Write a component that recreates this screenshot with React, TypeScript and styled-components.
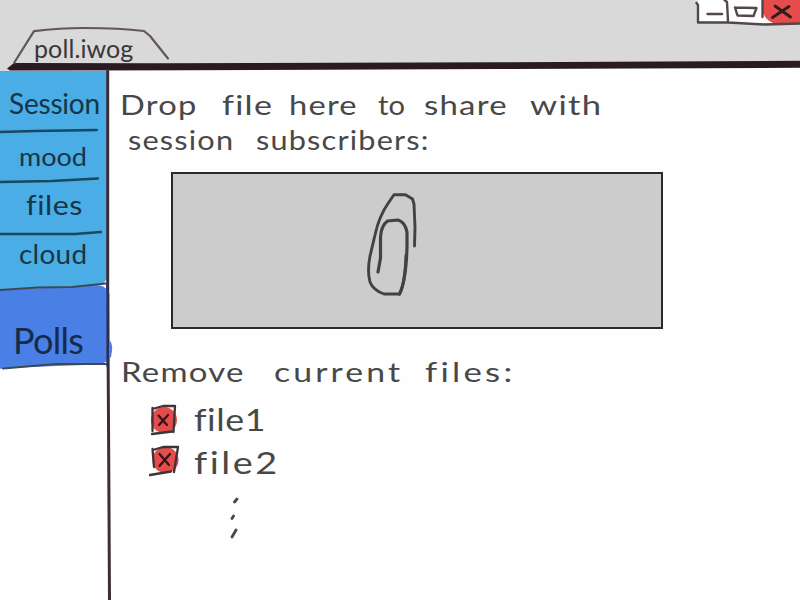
import React from "react";
import styled, { createGlobalStyle } from "styled-components";

const GlobalStyle = createGlobalStyle`
  * { box-sizing: border-box; }
  body { margin: 0; background: #fff; overflow: hidden; }
`;

const Window = styled.div`
  width: 800px;
  height: 600px;
  display: flex;
  flex-direction: column;
  background: #fefefe;
  color: #484848;
  font-family: Lato, "Open Sans", sans-serif;
  overflow: hidden;
`;

const TitleBar = styled.header`
  position: relative;
  display: flex;
  justify-content: space-between;
  flex: 0 0 71px;
  background: #d9d9d9;
`;

const Ink = styled.svg`
  position: absolute;
  left: 0;
  top: 0;
  overflow: visible;
  fill: none;
  stroke-linecap: round;
  stroke-linejoin: round;
  pointer-events: none;
`;

const TabTitle = styled.div`
  position: relative;
  padding: 29px 0 0 34px;
  line-height: 38px;
  color: #383637;
`;

const Controls = styled.svg`
  position: relative;
  width: 110px;
  height: 30px;
  overflow: hidden;
  fill: none;
  stroke: #54474a;
  stroke-width: 2.4;
  stroke-linecap: round;
  stroke-linejoin: round;
`;

const Body = styled.div`
  flex: 1;
  display: grid;
  grid-template-columns: 110px 1fr;
`;

const Sidebar = styled.nav`
  position: relative;
  display: flex;
  flex-direction: column;
`;

const NavItem = styled.a<{ $height: number; $left: number; $top: number; $active?: boolean }>`
  position: relative;
  height: ${(p) => p.$height}px;
  padding: ${(p) => p.$top}px 0 0 ${(p) => p.$left}px;
  line-height: 40px;
  color: ${(p) => (p.$active ? "#172a4c" : "#163546")};
`;

const Content = styled.main`
  display: flex;
  flex-direction: column;
`;

const Line = styled.div<{ $left: number; $height: number }>`
  display: flex;
  height: ${(p) => p.$height}px;
  line-height: 40px;
  padding-left: ${(p) => p.$left}px;
`;

const Word = styled.span<{ $size: number; $track?: number; $stretch?: number; $advance?: number }>`
  display: block;
  flex: none;
  white-space: nowrap;
  font-size: ${(p) => p.$size}px;
  letter-spacing: ${(p) => p.$track ?? 0}px;
  width: ${(p) => (p.$advance ? `${p.$advance}px` : "auto")};
  transform: scaleX(${(p) => p.$stretch ?? 1});
  transform-origin: left center;
`;

const Heading = styled.section`
  padding-top: 14px;
  height: 101px;
`;

const DropZone = styled.section`
  width: 492px;
  height: 157px;
  margin-left: 61px;
  border: 2px solid #2b2a2b;
  background: #ccc;
`;

const ClipIcon = styled.svg`
  display: block;
  margin: 15px 0 0 190px;
  fill: none;
  stroke: #424242;
  stroke-linecap: round;
  stroke-linejoin: round;
`;

const FileList = styled.section`
  padding-top: 23px;
`;

const FileRow = styled.div<{ $height: number }>`
  display: flex;
  height: ${(p) => p.$height}px;
  padding-left: 39px;
  line-height: 40px;
`;

const RemoveButton = styled.svg`
  flex: none;
  width: 45px;
  height: 40px;
  fill: none;
  stroke: #3c3536;
  stroke-width: 2.3;
  stroke-linecap: round;
  stroke-linejoin: round;
`;

const Ellipsis = styled.svg`
  display: block;
  margin: 11px 0 0 118px;
  stroke: #484848;
  stroke-width: 2.8;
  stroke-linecap: round;
`;

type W = { text: string; size: number; track: number; stretch: number; advance: number };

const intro: W[] = [
  { text: "Drop", size: 27, track: 1, stretch: 1.21, advance: 102 },
  { text: "file", size: 27, track: 1, stretch: 1.26, advance: 67 },
  { text: "here", size: 27, track: 1, stretch: 1.21, advance: 89 },
  { text: "to", size: 27, track: 0, stretch: 1.08, advance: 46 },
  { text: "share", size: 27, track: 1, stretch: 1.22, advance: 106 },
  { text: "with", size: 27, track: 1, stretch: 1.28, advance: 80 },
];
const intro2: W[] = [
  { text: "session", size: 26, track: 1, stretch: 1.18, advance: 128 },
  { text: "subscribers:", size: 26, track: 1, stretch: 1.18, advance: 190 },
];
const removal: W[] = [
  { text: "Remove", size: 27, track: 1, stretch: 1.22, advance: 153 },
  { text: "current", size: 27, track: 2.5, stretch: 1.25, advance: 151 },
  { text: "files:", size: 27, track: 2.5, stretch: 1.29, advance: 100 },
];

const Words = ({ items }: { items: W[] }) => (
  <>
    {items.map((w) => (
      <Word key={w.text} $size={w.size} $track={w.track} $stretch={w.stretch} $advance={w.advance}>
        {w.text}
      </Word>
    ))}
  </>
);

export default function App() {
  return (
    <>
      <GlobalStyle />
      <Window>
        <TitleBar>
          <Ink width="800" height="71">
            <path d="M104 71L800 66V71Z" fill="#fefefe" />
            <path d="M7 68.5L14 63L160 63.2L500 62.3L800 60.8V67.8L500 69L160 70.3L10 70.5Z" fill="#291b21" />
            <path d="M14 63L34 31.2Q60 28 84 28Q120 28 144 31L150 36L168 58.5" stroke="#62565a" strokeWidth="2.2" />
          </Ink>
          <TabTitle>
            <Word $size={25} $track={0.1}>poll.iwog</Word>
          </TabTitle>
          <Controls viewBox="690 0 110 30">
            <path d="M698 0H800V23L735 23L698 21Z" fill="#fefefe" stroke="none" />
            <path d="M763 0H800V23.5H774Q764 20 762 9Z" fill="#e64c4c" stroke="none" />
            <path d="M696.500 3L698 5V22.500M698 22.500L728 22.500L765 24.500L800 23.500M724.500 0L727 2L728 21M762.500 0V17M707.500 14H722M735 7.500L737.500 15.500L753.500 16L756.500 8L735 7.500" />
            <path d="M772.500 17.500L789 6.500M775 6L790.500 17" stroke="#301b20" strokeWidth="2.8" />
          </Controls>
        </TitleBar>
        <Body>
          <Sidebar>
            <Ink width="114" height="529" viewBox="0 71 114 529">
              <path d="M0 71H107V278Q105 284 97 286L0 290Z" fill="#4bade5" />
              <path d="M107.700 70V300L108.500 420L109.500 600" stroke="#3c2d37" strokeWidth="3" />
              <path d="M0 290L100 285.500Q107 287 109.500 294V340Q114 345 111 357Q107 363 98 364.500L3 368L0 369Z" fill="#4a80e5" />
              <path d="M107.700 284V366" stroke="#2f2e52" strokeWidth="2.600" />
              <path d="M0 132L35 131L97 130M0 182L52 181L98 178.500M0 234L75 234L101 232" stroke="#19495f" strokeWidth="2.3" />
              <path d="M0 290L38 287.500L72 287L106 283.500M3 368.500L56 364L106 364" stroke="#3c4855" strokeWidth="2.2" />
            </Ink>
            <NavItem $height={60} $top={12} $left={9}><Word $size={28} $track={-0.2}>Session</Word></NavItem>
            <NavItem $height={50} $top={5} $left={19}><Word $size={25} $stretch={1.08}>mood</Word></NavItem>
            <NavItem $height={53} $top={4} $left={26}><Word $size={27} $track={0.5} $stretch={1.12}>files</Word></NavItem>
            <NavItem $height={56} $top={0} $left={19}><Word $size={26} $track={0.3} $stretch={1.07}>cloud</Word></NavItem>
            <NavItem $height={80} $top={30} $left={13} $active><Word $size={36} $track={-0.7}>Polls</Word></NavItem>
          </Sidebar>
          <Content>
            <Heading>
              <Line $left={10} $height={35}><Words items={intro} /></Line>
              <Line $left={18} $height={40}><Words items={intro2} /></Line>
            </Heading>
            <DropZone>
              <ClipIcon width="60" height="110" viewBox="363 189 60 110">
                <path d="M414.500 246L415 227L414 204L412.500 199L405.500 194.700H394L389 202Q379 216 375 235L370 256Q367 271 370 282Q373 290 384 294H399.500Q405 284 406 255" strokeWidth="2.900" />
                <path d="M378 272L380.500 258V237Q381 226 387.500 221L398 220Q405 222 407 232V247Q406 281 399.500 294" strokeWidth="3.200" />
              </ClipIcon>
            </DropZone>
            <FileList>
              <Line $left={11} $height={47}><Words items={removal} /></Line>
              <FileRow $height={43}>
                <RemoveButton viewBox="149 399 45 40">
                  <circle cx="164" cy="420" r="13" fill="#e64c4c" stroke="none" />
                  <path d="M152.500 408V431M152.500 409L163 406L175 406L173.500 432M152 434L172 431.500" />
                  <path d="M159 425L168 415M158.500 415.500L167 425" stroke="#2c1719" />
                </RemoveButton>
                <Word $size={30} $track={0.5} $stretch={1.19}>file1</Word>
              </FileRow>
              <FileRow $height={42}>
                <RemoveButton viewBox="149 442 45 40">
                  <circle cx="165.500" cy="460" r="13" fill="#e64c4c" stroke="none" />
                  <path d="M152.500 449L154 467M153 450L163 447L178 447L174 472M150 475L171 471.500" />
                  <path d="M159.500 454L169 465M159.500 466L170 454" stroke="#2c1719" />
                </RemoveButton>
                <Word $size={30} $track={2} $stretch={1.26}>file2</Word>
              </FileRow>
              <Ellipsis width="16" height="46" viewBox="228 496 16 46">
                <path d="M237 500L234.500 503M233.500 517L232 519.500M236 531L232 538" />
              </Ellipsis>
            </FileList>
          </Content>
        </Body>
      </Window>
    </>
  );
}
